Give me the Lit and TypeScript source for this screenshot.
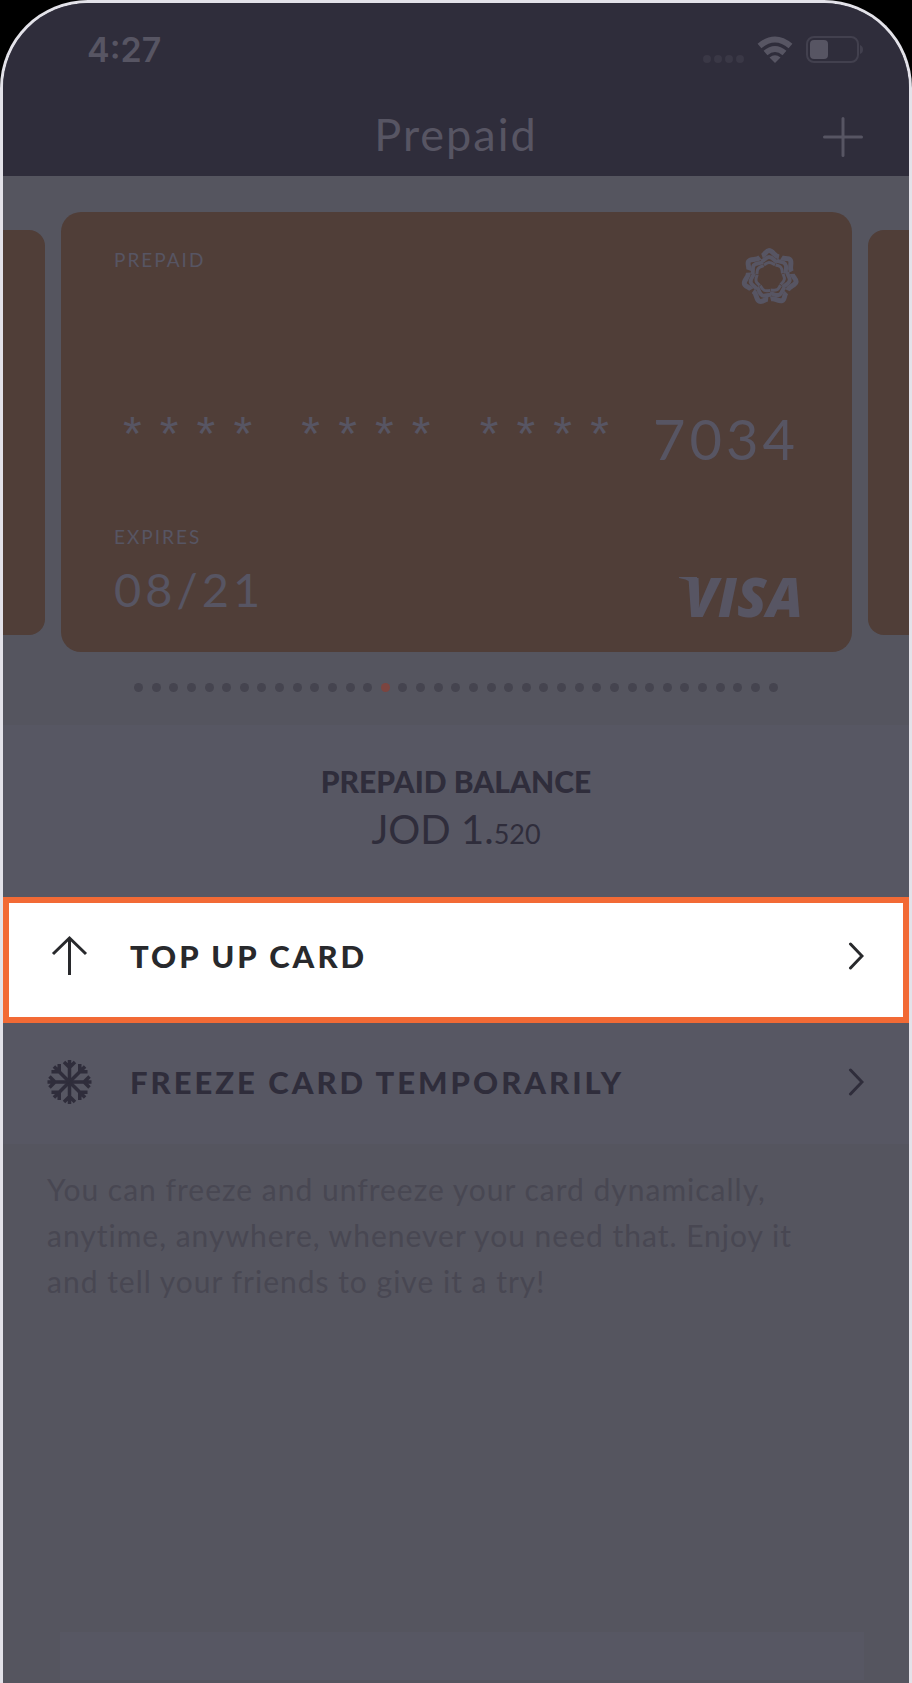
import { LitElement, html, css, svg } from "lit";
import { customElement, property, state } from "lit/decorators.js";
import { classMap } from "lit/directives/class-map.js";

const petals = [0, 1, 2, 3, 4, 5, 6];

@customElement("status-bar")
class StatusBar extends LitElement {
  static styles = css`
    :host {
      display: flex;
      align-items: center;
      justify-content: space-between;
      height: 94px;
      padding: 0 46px 0 84px;
      color: #575563;
      font: 600 34px/40px Inter, sans-serif;
    }
    .icons {
      display: flex;
      align-items: center;
      gap: 13px;
    }
  `;
  render() {
    return html`
      <span>4:27</span>
      <div class="icons">
        <svg width="42" height="28" viewBox="0 0 42 28" fill="#3a3846" aria-hidden="true">
          <circle cx="5" cy="23" r="4" /><circle cx="16" cy="23" r="4" />
          <circle cx="27" cy="23" r="4" /><circle cx="38" cy="23" r="4" />
        </svg>
        <svg width="36" height="28" viewBox="0 0 36 28" aria-hidden="true">
          <g fill="none" stroke="#575563" stroke-width="6">
            <path d="M2.500 10Q18 -3 33.500 10" />
            <path d="M8.500 17Q18 9 27.500 17" />
          </g>
          <path d="M12.500 21.500Q18 17 23.500 21.500L18 27Z" fill="#575563" />
        </svg>
        <svg width="57" height="28" viewBox="0 0 57 28" aria-hidden="true">
          <rect x="1" y="1" width="51" height="25" rx="7" fill="none" stroke="#42404e" stroke-width="2" />
          <rect x="4" y="4" width="18" height="19" rx="4" fill="#575563" />
          <path d="M54 9Q57 10 57 13.500T54 18Z" fill="#42404e" />
        </svg>
      </div>
    `;
  }
}

@customElement("bank-card")
class BankCard extends LitElement {
  @property() digits = "";
  @property() expires = "";
  static styles = css`
    :host {
      display: flex;
      flex-direction: column;
      box-sizing: border-box;
      height: 440px;
      padding: 36px 53px 30px 53px;
      border-radius: 20px;
      background: #503e38;
      color: #575563;
      font-family: Lato, sans-serif;
    }
    .row {
      display: flex;
      justify-content: space-between;
      align-items: flex-start;
    }
    .label {
      font-size: 19px;
      line-height: 24px;
      letter-spacing: 2px;
    }
    .number {
      display: flex;
      justify-content: space-between;
      align-items: center;
      height: 64px;
      margin-top: 101px;
      padding: 0 0 0 4px;
    }
    .mask {
      font: 48px/48px "Liberation Mono", monospace;
      letter-spacing: 8px;
    }
    .digits {
      font-size: 56px;
      line-height: 64px;
      letter-spacing: 4px;
    }
    .bottom {
      display: flex;
      justify-content: space-between;
      align-items: flex-end;
      margin-top: auto;
    }
    .expiry {
      padding-bottom: 5px;
    }
    .date {
      font-size: 47px;
      line-height: 56px;
      letter-spacing: 4px;
      margin-top: 12px;
    }
    .visa {
      display: flex;
      align-items: center;
      margin-right: -4px;
      font: italic 800 54px/52px "Open Sans", sans-serif;
    }
    .swoosh {
      margin-right: -14px;
      margin-bottom: 24px;
    }
  `;
  render() {
    return html`
      <div class="row">
        <span class="label">PREPAID</span>
        <svg width="58" height="58" viewBox="-29 -29 58 58" aria-hidden="true">
          ${petals.map(
            (i) => svg`<g transform="rotate(${(i * 360) / 7})" fill="none" stroke="#575563">
              <path d="M-8 -21C-5 -22 -4 -26.500 -1 -26.500C3 -26.500 4 -21 9 -20" stroke-width="5" />
              <path d="M-9 -15.500C-6 -16 -4 -20 -1 -20C3 -20 4 -16 7 -15" stroke-width="4" />
              <path d="M-6 -12C-4 -13 -3 -14.500 -1 -14.500C2 -14.500 3 -13 5 -12" stroke-width="3" />
            </g>`
          )}
        </svg>
      </div>
      <div class="number">
        <span class="mask">****</span>
        <span class="mask">****</span>
        <span class="mask">****</span>
        <span class="digits">${this.digits}</span>
      </div>
      <div class="bottom">
        <div class="expiry">
          <div class="label">EXPIRES</div>
          <div class="date">${this.expires}</div>
        </div>
        <div class="visa">
          <svg class="swoosh" width="20" height="14" viewBox="0 0 20 14" aria-hidden="true">
            <path d="M0 0H18L20 14Q14 3 0 1Z" fill="#575563" />
          </svg>
          <span>VISA</span>
        </div>
      </div>
    `;
  }
}

@customElement("action-row")
class ActionRow extends LitElement {
  @property() label = "";
  @property({ type: Boolean, reflect: true }) highlighted = false;
  static styles = css`
    :host {
      display: block;
      color: #2f2d3b;
    }
    :host([highlighted]) {
      color: #28292c;
    }
    .action {
      display: flex;
      align-items: center;
      box-sizing: border-box;
      width: 100%;
      min-height: 121px;
      padding: 0 45px 4px 42px;
      border: 0;
      background: #575763;
      color: inherit;
      font: 900 31px/36px Lato, sans-serif;
      letter-spacing: 3px;
      text-align: left;
      cursor: pointer;
    }
    :host([highlighted]) .action {
      min-height: 126px;
      padding: 0 39px 9px 36px;
      border: 6px solid #f26a35;
      background: #fff;
    }
    .icon {
      display: flex;
      margin-right: 36px;
    }
    .label {
      flex: 1;
    }
  `;
  render() {
    return html`
      <button class="action" type="button">
        <span class="icon"><slot></slot></span>
        <span class="label">${this.label}</span>
        <svg width="16" height="28" viewBox="0 0 16 28" fill="none" stroke="currentColor" stroke-width="3" stroke-linecap="round" aria-hidden="true">
          <path d="M2.500 2L14 14L2.500 26" />
        </svg>
      </button>
    `;
  }
}

@customElement("app-root")
class AppRoot extends LitElement {
  @state() active = 14;
  static styles = css`
    :host {
      display: block;
      background: #000;
      font-family: Lato, sans-serif;
    }
    .phone {
      display: flex;
      flex-direction: column;
      box-sizing: border-box;
      min-height: 100vh;
      border: 3px solid #e3e2e9;
      border-bottom: 0;
      border-radius: 88px 88px 0 0;
      overflow: hidden;
      background: #55555f;
    }
    .header {
      background: #2f2d3b;
      color: #575563;
    }
    .nav {
      display: grid;
      grid-template-columns: 1fr auto 1fr;
      align-items: center;
      height: 79px;
      padding: 0 46px;
    }
    .title {
      grid-column: 2;
      margin: 0;
      font-weight: 400;
      font-size: 45px;
      line-height: 56px;
      letter-spacing: 2px;
      padding-bottom: 6px;
    }
    .add {
      justify-self: end;
      display: flex;
      padding: 0;
      border: 0;
      background: none;
      color: inherit;
      cursor: pointer;
    }
    .hero {
      padding: 36px 0 33px;
    }
    .carousel {
      display: flex;
      align-items: center;
      gap: 16px;
    }
    .main {
      flex: 1;
    }
    .peek {
      width: 42px;
      height: 405px;
      background: #503e38;
    }
    .before {
      border-radius: 0 16px 16px 0;
    }
    .after {
      width: 41px;
      border-radius: 16px 0 0 16px;
    }
    .dots {
      display: flex;
      justify-content: space-between;
      max-width: 644px;
      margin: 31px auto 0;
    }
    .dot {
      width: 9px;
      height: 9px;
      border-radius: 50%;
      background: #45444f;
    }
    .on {
      background: #7c4540;
    }
    .balance {
      box-sizing: border-box;
      min-height: 172px;
      padding-top: 38px;
      background: #575763;
      color: #2f2d3b;
      text-align: center;
    }
    .heading {
      margin: 0;
      font-weight: 900;
      font-size: 30px;
      line-height: 36px;
    }
    .amount {
      margin: 6px 0 0;
      font-size: 40px;
      line-height: 48px;
    }
    .cents {
      font-size: 27px;
    }
    .note {
      margin: 0;
      padding: 22px 100px 0 44px;
      color: #484752;
      font-size: 30px;
      line-height: 46px;
      letter-spacing: 1px;
    }
    .panel {
      height: 48px;
      margin: auto 45px 3px 57px;
      background: #575763;
    }
  `;
  render() {
    return html`
      <main class="phone">
        <header class="header">
          <status-bar></status-bar>
          <div class="nav">
            <h1 class="title">Prepaid</h1>
            <button class="add" type="button" aria-label="Add card">
              <svg width="40" height="40" viewBox="0 0 40 40" fill="none" stroke="currentColor" stroke-width="3" stroke-linecap="round">
                <path d="M20 1.500V38.500M1.500 20H38.500" />
              </svg>
            </button>
          </div>
        </header>
        <section class="hero">
          <div class="carousel">
            <div class="peek before"></div>
            <bank-card class="main" digits="7034" expires="08/21"></bank-card>
            <div class="peek after"></div>
          </div>
          <div class="dots">
            ${Array.from(
              { length: 37 },
              (_, i) => html`<span class=${classMap({ dot: true, on: i === this.active })}></span>`
            )}
          </div>
        </section>
        <section class="balance">
          <h2 class="heading">PREPAID BALANCE</h2>
          <p class="amount">JOD 1.<span class="cents">520</span></p>
        </section>
        <action-row label="TOP UP CARD" highlighted>
          <svg width="49" height="44" viewBox="0 0 49 44" fill="none" stroke="currentColor" stroke-width="3" aria-hidden="true">
            <path d="M24.500 41V4M8 20L24.500 4L41 20" />
          </svg>
        </action-row>
        <action-row label="FREEZE CARD TEMPORARILY">
          <svg width="49" height="44" viewBox="-24.500 -22 49 44" fill="none" stroke="currentColor" stroke-width="3.500" aria-hidden="true">
            ${[0, 45, 90, 135, 180, 225, 270, 315].map(
              (a) => svg`<path transform="rotate(${a})" d="M0 0V-22M-5.500 -20L0 -14.500L5.500 -20" />`
            )}
          </svg>
        </action-row>
        <p class="note">
          You can freeze and unfreeze your card dynamically, anytime, anywhere, whenever you need that. Enjoy it and
          tell your friends to give it a try!
        </p>
        <div class="panel"></div>
      </main>
    `;
  }
}
